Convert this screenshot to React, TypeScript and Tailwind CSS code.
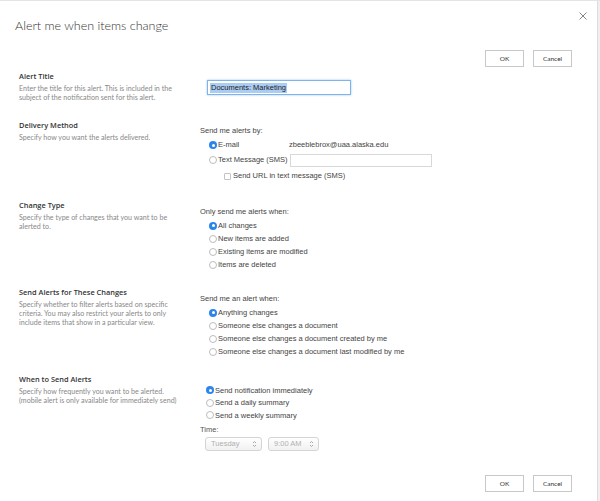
import React from "react";

const body = "font-['Liberation_Sans',Arial,sans-serif] text-[7.5px] text-[#444]";

function Radio({ checked }: { checked?: boolean }) {
  if (checked) {
    return (
      <span className="flex h-[8px] w-[8px] shrink-0 items-center justify-center rounded-full bg-[#2b85ec]">
        <span className="h-[3px] w-[3px] rounded-full bg-white" />
      </span>
    );
  }
  return <span className="h-[8px] w-[8px] shrink-0 rounded-full border border-[#bdbdbd] bg-white" />;
}

function Option({ label, checked, className = "h-[13px]" }: { label: string; checked?: boolean; className?: string }) {
  return (
    <div className={`flex items-center gap-[1px] ${className}`}>
      <Radio checked={checked} />
      <span className="whitespace-nowrap">{label}</span>
    </div>
  );
}

function Btn({ children }: { children: React.ReactNode }) {
  return (
    <button className="flex h-[17px] w-[39px] items-center justify-center border border-[#c8c8c8] bg-white font-['Lato',sans-serif] text-[6.5px] text-[#333]">
      {children}
    </button>
  );
}

function ButtonRow({ className = "" }: { className?: string }) {
  return (
    <div className={`flex justify-end gap-[9px] pr-[25px] ${className}`}>
      <Btn>OK</Btn>
      <Btn>Cancel</Btn>
    </div>
  );
}

function Section({
  title,
  desc,
  height,
  children,
}: {
  title: string;
  desc: React.ReactNode;
  height: string;
  children: React.ReactNode;
}) {
  return (
    <div className={`flex ${height}`}>
      <div className="ml-[19px] w-[181px] shrink-0">
        <div className="h-[10px] font-['Open_Sans',sans-serif] text-[7.4px] leading-[10px] font-semibold text-[#333]">
          {title}
        </div>
        <div className="mt-[3px] font-['Lato',sans-serif] text-[7.1px] leading-[9px] text-[#888]">{desc}</div>
      </div>
      <div className={`flex-1 ${body}`}>{children}</div>
    </div>
  );
}

function Select({ value, width }: { value: string; width: string }) {
  return (
    <div
      className={`flex h-[14px] items-center justify-between rounded-[3px] border border-[#d4d4d4] bg-gradient-to-b from-white to-[#f1f1f1] pl-[5px] pr-[4px] text-[#b0b0b0] ${width}`}
    >
      <span>{value}</span>
      <svg width="5" height="8" viewBox="0 0 5 8" fill="none" stroke="#a8a8a8" strokeWidth="1">
        <path d="M1 3 L2.5 1.5 L4 3" />
        <path d="M1 5 L2.5 6.5 L4 5" />
      </svg>
    </div>
  );
}

export default function App() {
  return (
    <div className="flex h-[501px] w-[600px] overflow-hidden border-t border-[#e4e4e4] bg-white">
      <div className="flex flex-1 flex-col">
        <div className="flex h-[49px] items-start justify-between">
          <h1 className="ml-[15px] mt-[17px] font-['Lato',sans-serif] text-[12.5px] leading-[16px] font-light text-[#333]">
            Alert me when items change
          </h1>
          <svg className="mr-[10px] mt-[11px]" width="8" height="8" viewBox="0 0 8 8" stroke="#777" strokeWidth="0.9">
            <path d="M0.5 0.5 L7.5 7.5 M7.5 0.5 L0.5 7.5" />
          </svg>
        </div>

        <ButtonRow />

        <div className="mt-[4px]">
          <Section
            title="Alert Title"
            height="h-[49px]"
            desc={
              <>
                Enter the title for this alert. This is included in the
                <br />
                subject of the notification sent for this alert.
              </>
            }
          >
            <div className="ml-[7px] mt-[9px] flex h-[15px] w-[144px] items-center border border-[#7fb4ea] px-[2px] shadow-[0_0_2px_#9cc8f2]">
              <span className="bg-[#abcdf3] px-[1px] leading-[10px] text-[#222]">Documents: Marketing</span>
            </div>
          </Section>

          <Section title="Delivery Method" height="h-[80px]" desc="Specify how you want the alerts delivered.">
            <div className="mt-[6px] h-[10px] leading-[10px]">Send me alerts by:</div>
            <div className="ml-[9px] mt-[4px] flex h-[10px] items-center">
              <div className="w-[80px]">
                <Option label="E-mail" checked className="h-[10px]" />
              </div>
              <span>zbeeblebrox@uaa.alaska.edu</span>
            </div>
            <div className="ml-[9px] mt-[3px] flex h-[14px] items-center">
              <div className="w-[81px]">
                <Option label="Text Message (SMS)" className="h-[14px]" />
              </div>
              <div className="h-[13px] w-[142px] border border-[#d8d8d8] bg-white" />
            </div>
            <div className="ml-[24px] mt-[4px] flex h-[10px] items-center gap-[2px]">
              <span className="h-[7px] w-[7px] rounded-[1px] border border-[#c4c4c4] bg-white" />
              <span>Send URL in text message (SMS)</span>
            </div>
          </Section>

          <Section
            title="Change Type"
            height="h-[87px]"
            desc={
              <>
                Specify the type of changes that you want to be
                <br />
                alerted to.
              </>
            }
          >
            <div className="mt-[7px] h-[10px] leading-[10px]">Only send me alerts when:</div>
            <div className="ml-[9px] mt-[2px]">
              <Option label="All changes" checked />
              <Option label="New items are added" />
              <Option label="Existing items are modified" />
              <Option label="Items are deleted" />
            </div>
          </Section>

          <Section
            title="Send Alerts for These Changes"
            height="h-[87px]"
            desc={
              <>
                Specify whether to filter alerts based on specific
                <br />
                criteria. You may also restrict your alerts to only
                <br />
                include items that show in a particular view.
              </>
            }
          >
            <div className="mt-[7px] h-[10px] leading-[10px]">Send me an alert when:</div>
            <div className="ml-[9px] mt-[2px]">
              <Option label="Anything changes" checked />
              <Option label="Someone else changes a document" />
              <Option label="Someone else changes a document created by me" />
              <Option label="Someone else changes a document last modified by me" />
            </div>
          </Section>

          <Section
            title="When to Send Alerts"
            height="h-[80px]"
            desc={
              <>
                Specify how frequently you want to be alerted.
                <br />
                (mobile alert is only available for immediately send)
              </>
            }
          >
            <div className="ml-[6px] mt-[10px]">
              <Option label="Send notification immediately" checked className="h-[12.5px]" />
              <Option label="Send a daily summary" className="h-[12.5px]" />
              <Option label="Send a weekly summary" className="h-[12.5px]" />
            </div>
            <div className="mt-[3.5px] h-[10px] leading-[10px] text-[#555]">Time:</div>
            <div className="ml-[5px] mt-[2px] flex gap-[6px]">
              <Select value="Tuesday" width="w-[57px]" />
              <Select value="9:00 AM" width="w-[51px]" />
            </div>
          </Section>
        </div>

        <ButtonRow className="mb-[9px] mt-auto" />
      </div>
      <div className="w-[3px] border-l border-[#dcdcdc] bg-[#efefef]" />
    </div>
  );
}
